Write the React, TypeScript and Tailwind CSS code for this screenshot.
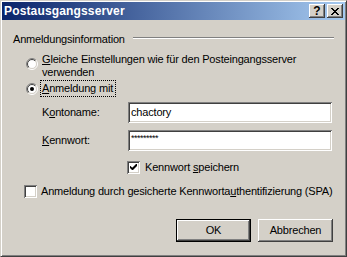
import React from "react";

function Radio({ checked, className = "" }: { checked?: boolean; className?: string }) {
  return (
    <svg width="12" height="12" viewBox="0 0 12 12" className={"shrink-0 " + className}>
      <defs>
        <linearGradient id="ro" x1="0" y1="0" x2="1" y2="1">
          <stop offset="0.5" stopColor="#808080" />
          <stop offset="0.5" stopColor="#ffffff" />
        </linearGradient>
        <linearGradient id="ri" x1="0" y1="0" x2="1" y2="1">
          <stop offset="0.5" stopColor="#404040" />
          <stop offset="0.5" stopColor="#d4d0c8" />
        </linearGradient>
      </defs>
      <circle cx="6" cy="6" r="5.5" fill="none" stroke="url(#ro)" strokeWidth="1" />
      <circle cx="6" cy="6" r="4.5" fill="#ffffff" stroke="url(#ri)" strokeWidth="1" />
      {checked && <circle cx="6" cy="6" r="2" fill="#000000" />}
    </svg>
  );
}

function Check({ checked, className = "" }: { checked?: boolean; className?: string }) {
  return (
    <div
      className={
        "w-[13px] h-[13px] shrink-0 bg-white shadow-[inset_1px_1px_0_#808080,inset_-1px_-1px_0_#ffffff,inset_2px_2px_0_#404040,inset_-2px_-2px_0_#d4d0c8] flex items-center justify-center " +
        className
      }
    >
      {checked && (
        <svg width="13" height="13" viewBox="0 0 13 13">
          <path d="M3 5v2l2 2h1l4-4V3h-1l-3.5 3.5h-0.5L3.5 5z" fill="#000" />
        </svg>
      )}
    </div>
  );
}

function Field({ children }: { children?: React.ReactNode }) {
  return (
    <div className="w-[204px] h-[21px] bg-white shadow-[inset_1px_1px_0_#808080,inset_-1px_-1px_0_#ffffff,inset_2px_2px_0_#404040,inset_-2px_-2px_0_#d4d0c8] flex items-center pl-[3px]">
      {children}
    </div>
  );
}

function CapBtn({ children, className = "" }: { children: React.ReactNode; className?: string }) {
  return (
    <div
      className={
        "w-[16px] h-[14px] bg-[#d4d0c8] shadow-[inset_-1px_-1px_0_#404040,inset_1px_1px_0_#ffffff,inset_-2px_-2px_0_#808080] flex items-center justify-center " +
        className
      }
    >
      {children}
    </div>
  );
}

export default function App() {
  return (
    <div className="w-[347px] h-[257px] bg-[#d4d0c8] border border-t-[#d4d0c8] border-l-[#d4d0c8] border-r-[#404040] border-b-[#404040] shadow-[inset_1px_1px_0_#ffffff,inset_-1px_-1px_0_#808080] p-px font-['Liberation_Sans',Arial,sans-serif] text-[11px] leading-[13px] tracking-[-0.18px] text-black flex flex-col">
      <div className="h-[18px] shrink-0 flex items-center bg-[linear-gradient(to_right,#0a246a,#a6caf0)] pl-[2px] pr-[2px]">
        <span className="flex-1 text-white font-bold text-[12px] tracking-[0.15px]">Postausgangsserver</span>
        <CapBtn>
          <span className="font-bold text-[12px] leading-[12px] tracking-normal pb-px">?</span>
        </CapBtn>
        <CapBtn className="ml-[2px]">
          <svg width="8" height="7" viewBox="0 0 8 7" shapeRendering="crispEdges">
            <path d="M0 0h2v1h-2zM6 0h2v1h-2zM1 1h2v1h-2zM5 1h2v1h-2zM2 2h4v1h-4zM3 3h2v1h-2zM2 4h4v1h-4zM1 5h2v1h-2zM5 5h2v1h-2zM0 6h2v1h-2zM6 6h2v1h-2z" fill="#000" />
          </svg>
        </CapBtn>
      </div>

      <div className="flex flex-col">
        <div className="mt-[13px] flex items-start">
          <span className="ml-[11px] w-[120px] shrink-0">Anmeldungsinformation</span>
          <div className="mt-[4px] flex-1 mr-[11px] h-[2px] border-t border-t-[#808080] border-b border-b-white" />
        </div>

        <div className="mt-[7px] ml-[24px] flex items-start">
          <Radio className="mt-[5px]" />
          <div className="ml-[4px]">
            <u>G</u>leiche Einstellungen wie für den Posteingangsserver
            <br />
            verwenden
          </div>
        </div>

        <div className="mt-px ml-[24px] h-[17px] flex items-center">
          <Radio checked />
          <div className="ml-[2px] h-[17px] flex items-center border border-dotted border-black pl-px pr-[2px]">
            <span>
              <u>A</u>nmeldung mit
            </span>
          </div>
        </div>

        <div className="mt-[5px] flex items-center">
          <span className="ml-[40px] w-[86px] shrink-0">
            K<u>o</u>ntoname:
          </span>
          <Field>chactory</Field>
        </div>

        <div className="mt-[7px] flex items-center">
          <span className="ml-[40px] w-[86px] shrink-0">
            <u>K</u>ennwort:
          </span>
          <Field>
            <span className="text-[9px] leading-[9px] tracking-[-0.5px] self-start mt-[4px]">*********</span>
          </Field>
        </div>

        <div className="mt-[10px] ml-[125px] flex items-center">
          <Check checked />
          <span className="ml-[5px]">
            Kennwort <u>s</u>peichern
          </span>
        </div>

        <div className="mt-[11px] ml-[22px] flex items-center">
          <Check />
          <span className="ml-[4px]">
            Anmeldung durch gesicherte Kennworta<u>u</u>thentifizierung (SPA)
          </span>
        </div>

        <div className="mt-[21px] mr-[12px] flex justify-end gap-[7px]">
          <div className="w-[75px] h-[23px] border border-black shadow-[inset_-1px_-1px_0_#404040,inset_1px_1px_0_#ffffff,inset_-2px_-2px_0_#808080] flex items-center justify-center">
            OK
          </div>
          <div className="w-[75px] h-[23px] shadow-[inset_-1px_-1px_0_#404040,inset_1px_1px_0_#ffffff,inset_-2px_-2px_0_#808080] flex items-center justify-center">
            Abbrechen
          </div>
        </div>
      </div>
    </div>
  );
}
